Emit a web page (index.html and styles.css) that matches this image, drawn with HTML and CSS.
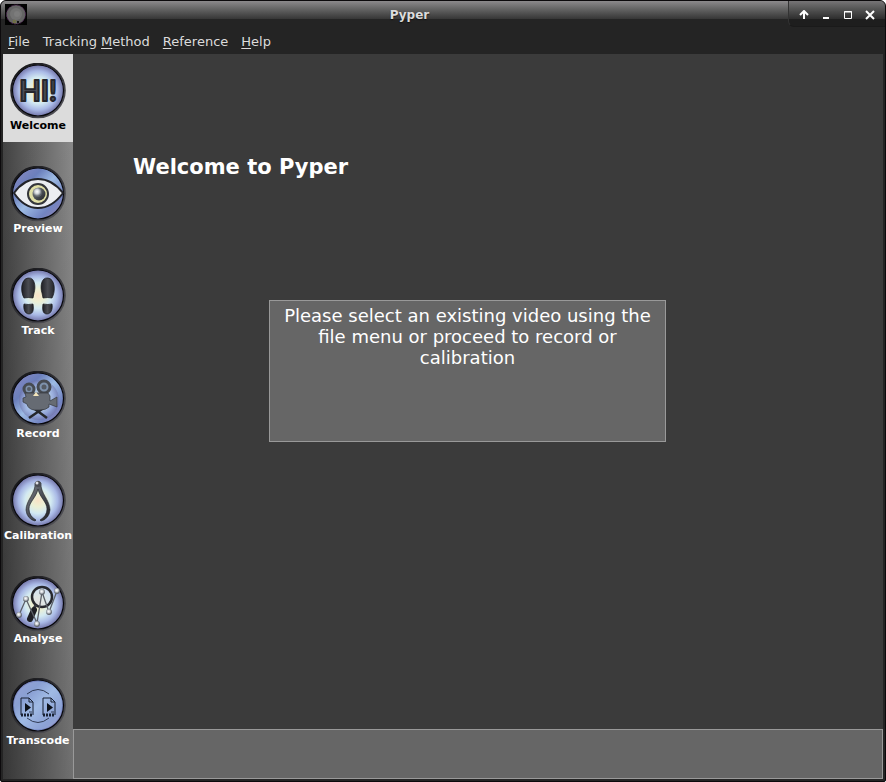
FILE: index.html
```html
<!DOCTYPE html>
<html lang="en">
<head>
<meta charset="utf-8">
<title>Pyper</title>
<link rel="stylesheet" href="styles.css">
</head>
<body>
<svg class="defs" aria-hidden="true">
  <defs>
    <radialGradient id="glow"><stop offset="0" stop-color="#f8e2c6"/><stop offset=".25" stop-color="#ecf0d4"/><stop offset=".5" stop-color="#d3eaf2"/><stop offset=".75" stop-color="#a9b9e6"/><stop offset="1" stop-color="#6f70a4"/></radialGradient>
    <linearGradient id="haze" x1="0" y1="0" x2="1" y2="1"><stop offset="0" stop-color="#8f8cc4"/><stop offset=".3" stop-color="#6b7fbc"/><stop offset=".5" stop-color="#9dbbe4"/><stop offset=".75" stop-color="#7284c2"/><stop offset="1" stop-color="#9a82ad"/></linearGradient>
    <linearGradient id="rim" x1="0" y1="0" x2="1" y2="1"><stop offset="0" stop-color="#101012"/><stop offset=".5" stop-color="#333338"/><stop offset="1" stop-color="#5a5a60"/></linearGradient>
    <linearGradient id="metal" x1="0" y1="0" x2="1" y2="1"><stop offset="0" stop-color="#85898f"/><stop offset=".5" stop-color="#4c5057"/><stop offset="1" stop-color="#202226"/></linearGradient>
    <linearGradient id="sole" x1="0" y1="0" x2="1" y2="0"><stop offset="0" stop-color="#1e1f24"/><stop offset=".5" stop-color="#4a4c52"/><stop offset="1" stop-color="#25262a"/></linearGradient>
    <radialGradient id="pearl" cx=".45" cy=".4"><stop offset="0" stop-color="#fff"/><stop offset=".5" stop-color="#cfd3d8"/><stop offset="1" stop-color="#60656c"/></radialGradient>
    <g id="ring"><circle cx="28" cy="27.500" r="26.800" fill="none" stroke="url(#rim)" stroke-width="2"/><circle cx="28" cy="27.500" r="25.500" fill="none" stroke="#08080c" stroke-width="1.200"/></g>
  </defs>
</svg>
<div class="window">
  <header class="titlebar">
    <svg class="app-icon" viewBox="0 0 22 21" aria-hidden="true"><rect width="22" height="21" fill="#020202"/><circle cx="11" cy="10.500" r="9.500" fill="#646464" stroke="#4c2550" stroke-dasharray="2 1"/><circle cx="11" cy="10" r="6" fill="#737373"/><circle cx="12" cy="10" r="3" fill="#7c7c7c"/><path d="M8 17l2-1 1 2-2 1z" fill="none" stroke="#77773a"/><path d="M12 18h2" stroke="#111" stroke-width="2"/></svg>
    <div class="caption">Pyper</div>
    <div class="controls">
      <button type="button" aria-label="Shade"><svg viewBox="0 0 10 10"><path d="M5 1v8M1 5l4-4 4 4" stroke-width="2"/></svg></button>
      <button type="button" aria-label="Minimize"><svg viewBox="0 0 10 10"><path d="M2 8h6" stroke-width="2"/></svg></button>
      <button type="button" aria-label="Maximize"><svg viewBox="0 0 10 10"><path d="M1.500 1.500h7v7h-7zM1 2h8"/></svg></button>
      <button type="button" aria-label="Close"><svg viewBox="0 0 10 10"><path d="M1 1l8 8M9 1L1 9" stroke-width="2"/></svg></button>
    </div>
  </header>
  <nav class="menubar">
    <button type="button"><u>F</u>ile</button>
    <button type="button">Tracking <u>M</u>ethod</button>
    <button type="button"><u>R</u>eference</button>
    <button type="button"><u>H</u>elp</button>
  </nav>
  <div class="body">
    <nav class="sidebar">
      <button type="button" class="tab selected">
        <svg viewBox="0 0 56 56"><circle cx="28" cy="27.500" r="26" fill="url(#glow)"/><use href="#ring"/><text class="hi" x="28" y="38" text-anchor="middle">HI!</text></svg>
        <span>Welcome</span>
      </button>
      <button type="button" class="tab">
        <svg viewBox="0 0 56 56"><circle cx="28" cy="27.500" r="26" fill="url(#haze)"/><use href="#ring"/><path d="M4 27Q14 13 28 13T53 27Q42 42 28 42T4 27z" fill="#eceef2" stroke="#222329" stroke-width="2"/><circle cx="28" cy="28" r="10" fill="#e0dfa6" stroke="#34363b" stroke-width="2"/><circle cx="29" cy="28" r="6.500" fill="url(#metal)"/><circle cx="27.500" cy="26.500" r="4.500" fill="url(#pearl)"/></svg>
        <span>Preview</span>
      </button>
      <button type="button" class="tab">
        <svg viewBox="0 0 56 56"><circle cx="28" cy="27.500" r="26" fill="url(#glow)"/><use href="#ring"/><g fill="url(#sole)" stroke="#15161a" stroke-width=".7"><path d="M14 30C10 23 11 11 18 10c7-1 8 9 6 15l-1 5q-5-1-9 0z"/><path d="M14 36q4 1 9 0c1 6 0 10-4 10s-6-5-5-10z"/><path d="M42 30c4-7 3-19-4-20-7-1-8 9-6 15l1 5q5-1 9 0z"/><path d="M42 36q-4 1-9 0c-1 6 0 10 4 10s6-5 5-10z"/></g></svg>
        <span>Track</span>
      </button>
      <button type="button" class="tab">
        <svg viewBox="0 0 56 56"><circle cx="28" cy="27.500" r="26" fill="url(#haze)"/><circle cx="29" cy="29" r="20" fill="url(#glow)" opacity=".5"/><use href="#ring"/><path d="M35 36L19 47M22 36l15 11" stroke="#25272b" stroke-width="2.500"/><circle cx="19" cy="18" r="5" fill="#7e92ac" stroke="#464a51" stroke-width="3"/><circle cx="34" cy="16" r="6" fill="#7e92ac" stroke="#464a51" stroke-width="3"/><circle cx="19" cy="18" r="2" fill="#555b64"/><circle cx="34" cy="16" r="2.500" fill="#555b64"/><path d="M15 22h23l2 3v5l7-4v10l-8-3v3q-3 3-9 3h-6q-6-1-7-6l-4-2v-4l3-1z" fill="#666b73" stroke="#33363c" stroke-width=".7"/><path d="M23 25l3-4 3 4z" fill="#f4e6bb"/></svg>
        <span>Record</span>
      </button>
      <button type="button" class="tab">
        <svg viewBox="0 0 56 56"><circle cx="28" cy="27.500" r="26" fill="url(#glow)"/><use href="#ring"/><path d="M25 10C26 20 16 27 16 37q1 9 9 11l1-1q-7-4-7-11c0-7 7-11 9-20 2 9 9 13 9 20q0 7-7 11l1 1q8-2 9-11c0-10-10-17-9-27l-3-2z" fill="url(#metal)" stroke="#18191d" stroke-width=".6"/><circle cx="28" cy="11" r="3" fill="#4a4d53"/><circle cx="27" cy="10" r="1.500" fill="#e0e2e6"/></svg>
        <span>Calibration</span>
      </button>
      <button type="button" class="tab">
        <svg viewBox="0 0 56 56"><circle cx="28" cy="27.500" r="26" fill="url(#glow)"/><use href="#ring"/><circle cx="32" cy="21" r="10" fill="#d6e0ee" fill-opacity=".6" stroke="#27282d" stroke-width="2.500"/><path d="M26 29l-3 5" stroke="#383a40" stroke-width="3"/><path d="M24 34l-4 9" stroke="#1f2024" stroke-width="6" stroke-linecap="round"/><path d="M9 39l7-16 11 24 5-31 7 20 8-21" fill="none" stroke="#5c6067" stroke-width="1.300"/><g fill="url(#pearl)"><circle cx="9" cy="39" r="2.900"/><circle cx="16" cy="23" r="2.900"/><circle cx="27" cy="48" r="2.900"/><circle cx="32" cy="16" r="2.900"/><circle cx="39" cy="36" r="2.900"/><circle cx="47" cy="15" r="2.900"/></g></svg>
        <span>Analyse</span>
      </button>
      <button type="button" class="tab">
        <svg viewBox="0 0 56 56"><circle cx="28" cy="27.500" r="26" fill="url(#haze)"/><circle cx="28" cy="27.500" r="24" fill="#a3b9e5" opacity=".55"/><use href="#ring"/><g fill="none" stroke="#182033"><path d="M17 16q11-9 22 0M17 40q11 9 22 0" stroke-width=".8"/><path d="M11 37V20h8l4 4v13M19 20v4h4M33 37V20h8l4 4v13M41 20v4h4"/><path d="M11 37h12M33 37h12" stroke-width="3" stroke-dasharray="2 1"/><path d="M19 34h3M41 34h3" stroke-width=".8"/></g><path d="M15 25l6 4.500-6 4.500zM37 25l6 4.500-6 4.500z" fill="#0c1019"/></svg>
        <span>Transcode</span>
      </button>
    </nav>
    <div class="content">
      <main class="page">
        <h1>Welcome to Pyper</h1>
        <p class="message">Please select an existing video using the file menu or proceed to record or calibration</p>
      </main>
      <footer class="status"></footer>
    </div>
  </div>
</div>
</body>
</html>
```
FILE: styles.css
```css
* { box-sizing: border-box; }
html { background: #fff; }
body { margin: 0; font-family: "DejaVu Sans", sans-serif; }
button { margin: 0; padding: 0; border: 0; background: none; color: inherit; font: inherit; }
.defs { position: absolute; width: 0; height: 0; }
.window {
  display: flex;
  flex-direction: column;
  min-height: 100vh;
  padding: 0 2px 2px;
  border: 1px solid #0c0a0c;
  border-radius: 6px 6px 2px 2px;
  background: #242424;
  overflow: hidden;
}
.titlebar {
  display: flex;
  align-items: flex-start;
  height: 28px;
  margin: 0 -2px;
  background: linear-gradient(#8c8a8c, #646464 8px, #363636 18px, #242424 18px);
}
.app-icon { width: 22px; height: 21px; margin: 3px 0 0 4px; }
.caption {
  flex: 1;
  padding-left: 4px;
  color: #dcdcdc;
  font-size: 12px;
  font-weight: bold;
  line-height: 28px;
  text-align: center;
  text-shadow: 0 1px 1px #111;
}
.controls {
  display: flex;
  align-items: center;
  gap: 12px;
  height: 26px;
  padding: 2px 10px 0;
  border-left: 1px solid #333;
  border-bottom: 1px solid #1a1a1a;
  border-radius: 0 0 0 6px;
  background: rgba(0, 0, 0, .15);
}
.controls button { width: 10px; height: 10px; }
.controls svg { display: block; width: 10px; height: 10px; fill: none; stroke: #fff; }
.menubar {
  display: flex;
  gap: 13px;
  height: 25px;
  padding-left: 5px;
  color: #dcdcdc;
  font-size: 13px;
  line-height: 25px;
}
.menubar u { text-underline-offset: 2px; text-decoration-thickness: 1px; }
.body { display: flex; flex: 1; }
.sidebar {
  display: flex;
  flex-direction: column;
  justify-content: space-between;
  width: 70px;
  padding-bottom: 22px;
  background:
    linear-gradient(rgba(0, 0, 0, 0), rgba(0, 0, 0, .2)),
    linear-gradient(90deg, #444, #8c8c8c);
}
.tab {
  display: flex;
  flex-direction: column;
  align-items: center;
  height: 88px;
  padding-top: 9px;
  color: #fff;
  font-size: 11px;
  font-weight: bold;
  line-height: 13px;
}
.tab svg { width: 56px; height: 56px; }
.selected { background: #dcdcdc; color: #000; }
.hi {
  fill: #4c5057;
  stroke: #26272c;
  stroke-width: 2;
  stroke-linejoin: round;
  font-family: Lato, sans-serif;
  font-size: 28px;
  font-weight: 700;
}
.content { display: flex; flex: 1; flex-direction: column; }
.page { flex: 1; padding: 100px 217px 0 60px; background: #3b3b3b; }
h1 { margin: 0; color: #fff; font-size: 21px; line-height: 26px; white-space: nowrap; }
.message {
  min-height: 142px;
  margin: 120px 0 0 136px;
  padding: 4px 8px;
  border: 1px solid #999;
  background: #666;
  color: #fff;
  font-size: 18px;
  line-height: 21px;
  text-align: center;
}
.status { height: 50px; border: 1px solid #999; background: #666; }
```
